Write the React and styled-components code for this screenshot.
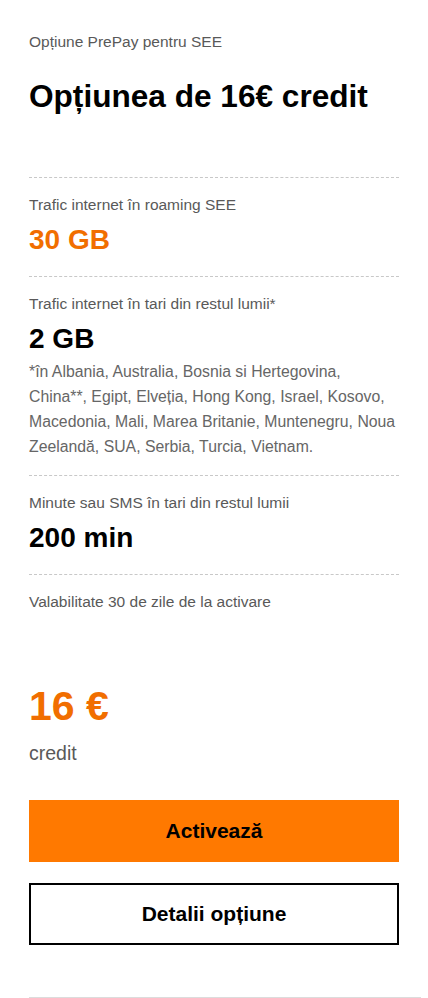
import styled, { createGlobalStyle } from 'styled-components';

const GlobalStyle = createGlobalStyle`
  html, body {
    margin: 0;
    padding: 0;
    background: #ffffff;
  }
  body {
    font-family: "Liberation Sans", Arial, sans-serif;
    color: #000;
  }
`;

const Page = styled.div`
  width: 428px;
  height: 998px;
  overflow: hidden;
  padding: 31px 29px 0 29px;
  box-sizing: border-box;
`;

const Eyebrow = styled.div`
  font-size: 15.5px;
  line-height: 22px;
  color: #595959;
`;

const Title = styled.h1`
  margin: 25px 0 0 0;
  font-size: 31.6px;
  line-height: 36px;
  font-weight: 700;
`;

const Details = styled.div`
  margin-top: 63px;
`;

const Section = styled.div`
  border-top: 1px dashed #c8c8c8;
  padding: 16px 0 20px 0;
`;

const Label = styled.div`
  font-size: 15.5px;
  line-height: 22px;
  color: #595959;
`;

const Value = styled.div`
  margin-top: 8px;
  font-size: 28px;
  line-height: 32px;
  font-weight: 700;
  color: ${({ accent }) => (accent ? '#f16e00' : '#000')};
`;

const Note = styled.p`
  margin: 4px 0 -4px 0;
  font-size: 15.8px;
  line-height: 25px;
  color: #666;
`;

const Price = styled.div`
  margin-top: 49px;
  font-size: 41px;
  line-height: 48px;
  font-weight: 700;
  color: #f16e00;
`;

const PriceUnit = styled.div`
  margin-top: 11px;
  font-size: 19.5px;
  line-height: 24px;
  color: #595959;
`;

const Button = styled.button`
  display: flex;
  align-items: center;
  justify-content: center;
  width: 100%;
  height: 62px;
  box-sizing: border-box;
  font-family: "Liberation Sans", Arial, sans-serif;
  font-size: 21px;
  font-weight: 700;
  color: #000;
  cursor: pointer;
  background: ${({ primary }) => (primary ? '#ff7900' : '#fff')};
  border: ${({ primary }) => (primary ? '0' : '2px solid #000')};
  border-radius: 0;
`;

const Actions = styled.div`
  margin-top: 35px;
  display: flex;
  flex-direction: column;
  gap: 21px;
`;

const Footer = styled.div`
  margin-top: 52px;
  margin-right: -22px;
  border-top: 1px solid #dcdcdc;
`;

const rows = [
  { label: 'Trafic internet în roaming SEE', value: '30 GB', accent: true },
  {
    label: 'Trafic internet în tari din restul lumii*',
    value: '2 GB',
    note:
      '*în Albania, Australia, Bosnia si Hertegovina, China**, Egipt, Elveția, Hong Kong, Israel, Kosovo, Macedonia, Mali, Marea Britanie, Muntenegru, Noua Zeelandă, SUA, Serbia, Turcia, Vietnam.',
  },
  { label: 'Minute sau SMS în tari din restul lumii', value: '200 min' },
  { label: 'Valabilitate 30 de zile de la activare' },
];

export default function App() {
  return (
    <>
      <GlobalStyle />
      <Page>
        <Eyebrow>Opțiune PrePay pentru SEE</Eyebrow>
        <Title>Opțiunea de 16€ credit</Title>
        <Details>
          {rows.map((row) => (
            <Section key={row.label}>
              <Label>{row.label}</Label>
              {row.value && <Value accent={row.accent}>{row.value}</Value>}
              {row.note && <Note>{row.note}</Note>}
            </Section>
          ))}
        </Details>
        <Price>16 €</Price>
        <PriceUnit>credit</PriceUnit>
        <Actions>
          <Button primary>Activează</Button>
          <Button>Detalii opțiune</Button>
        </Actions>
        <Footer />
      </Page>
    </>
  );
}
